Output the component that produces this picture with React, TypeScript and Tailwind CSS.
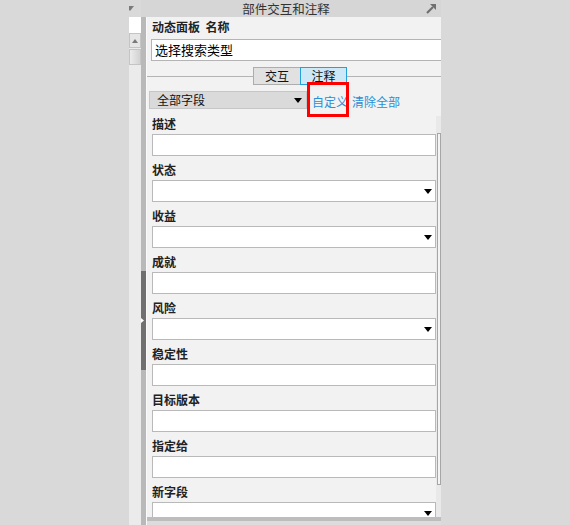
import React from "react";

const fields: { label: string; kind: "text" | "select" }[] = [
  { label: "描述", kind: "text" },
  { label: "状态", kind: "select" },
  { label: "收益", kind: "select" },
  { label: "成就", kind: "text" },
  { label: "风险", kind: "select" },
  { label: "稳定性", kind: "text" },
  { label: "目标版本", kind: "text" },
  { label: "指定给", kind: "text" },
  { label: "新字段", kind: "select" },
];

function Caret({ color = "#000" }: { color?: string }) {
  return (
    <svg width="8" height="5" viewBox="0 0 8 5" className="shrink-0">
      <polygon points="0,0 8,0 4,5" fill={color} />
    </svg>
  );
}

function PopOutIcon() {
  return (
    <svg width="10" height="10" viewBox="0 0 10 10">
      <polygon points="10,0 10,6 4,0" fill="#6f6f6f" />
      <line x1="1" y1="9" x2="7" y2="3" stroke="#6f6f6f" strokeWidth="2.2" />
    </svg>
  );
}

function Field({ label, kind, first }: { label: string; kind: "text" | "select"; first?: boolean }) {
  return (
    <div className={first ? "" : "mt-[6px]"}>
      <div className="h-[16px] leading-[16px] text-[12px] font-bold text-[#222]">{label}</div>
      <div className="mt-[2px] h-[22px] w-[284px] bg-white border border-[#b9b9b9] flex items-center justify-end pr-[3px]">
        {kind === "select" && <Caret />}
      </div>
    </div>
  );
}

export default function App() {
  return (
    <div
      className="w-[570px] h-[525px] flex bg-[#d9d9d9] overflow-hidden"
      style={{ fontFamily: '"Noto Sans CJK SC", "Noto Sans", sans-serif' }}
    >
      <div className="w-[129px] shrink-0" />

      {/* left panel scroll strip */}
      <div className="w-[12px] shrink-0 flex flex-col bg-[#ebebeb]">
        <div className="h-[17px] bg-[#d9d9d9] flex items-center overflow-hidden">
          <div className="ml-[-3px]">
            <Caret color="#7a7a7a" />
          </div>
        </div>
        <div className="h-[16px] bg-white" />
        <div className="h-[15px] bg-[#e6e6e6] border border-[#c4c4c4] flex items-center justify-center">
          <svg width="6" height="4" viewBox="0 0 6 4">
            <polygon points="0,4 6,4 3,0" fill="#7a7a7a" />
          </svg>
        </div>
        <div className="mt-[1px] h-[16px] border border-[#c4c4c4] bg-gradient-to-r from-[#ececec] to-[#d2d2d2]" />
      </div>

      {/* splitter */}
      <div className="w-[5px] shrink-0 flex flex-col">
        <div className="h-[17px] bg-[#d6d6d6]" />
        <div className="h-[254px] bg-[#b9b9b9]" />
        <div className="h-[99px] bg-[#707070] flex items-center">
          <svg width="3" height="5" viewBox="0 0 3 5">
            <polygon points="0,0 3,2.5 0,5" fill="#ffffff" />
          </svg>
        </div>
        <div className="flex-1 bg-[#b9b9b9]" />
      </div>

      {/* main panel */}
      <div className="w-[295px] shrink-0 flex flex-col">
        <div className="h-[17px] bg-[#d6d6d6] flex items-center relative">
          <div className="flex-1 text-center text-[12.5px] leading-[17px] text-[#333]">部件交互和注释</div>
          <div className="w-[15px] flex items-center">
            <PopOutIcon />
          </div>
        </div>

        <div className="flex-1 bg-[#f2f2f2] border-l border-[#fafafa] flex flex-col min-h-0">
          <div className="mt-[2px] ml-[5px] h-[16px] leading-[16px] text-[12px] font-bold text-[#222]">动态面板&nbsp;&nbsp;名称</div>
          <div className="mt-[4px] ml-[4px] h-[22px] bg-white border border-r-0 border-[#b4b4b4] flex items-center pl-[3px] text-[13px] text-black">
            选择搜索类型
          </div>

          {/* tabs */}
          <div className="mt-[6px] h-[18px] flex">
            <div className="w-[106px] h-[10px] border-b border-[#b4b4b4]" />
            <div className="w-[47px] h-[18px] bg-[#e1e1e1] border border-r-0 border-[#adadad] flex items-center justify-center text-[12px] text-[#111]">
              交互
            </div>
            <div className="w-[47px] h-[18px] bg-[#cde8f7] border border-[#26a0da] flex items-center justify-center text-[12px] text-[#111]">
              注释
            </div>
            <div className="flex-1 h-[10px] border-b border-[#b4b4b4]" />
          </div>

          {/* filter row */}
          <div className="mt-[6px] ml-[2px] flex items-center h-[18px]">
            <div className="w-[158px] h-[18px] bg-[#dadada] border border-[#c6c6c6] flex items-center justify-between pl-[7px] pr-[4px] text-[12px] text-[#111]">
              <span>全部字段</span>
              <Caret />
            </div>
            <div className="relative ml-[5px] pt-[4px] text-[12px] text-[#2b8ed6]">
              自定义
              <div className="absolute left-[-5px] top-[-7px] w-[42px] h-[35px] border-[3px] border-[#ff0000]" />
            </div>
            <div className="ml-[4px] pt-[4px] text-[12px] text-[#2b8ed6]">清除全部</div>
          </div>

          {/* scroll area */}
          <div className="mt-[7px] h-[401px] flex overflow-hidden">
            <div className="flex-1 pl-[5px]">
              {fields.map((f, i) => (
                <Field key={f.label} label={f.label} kind={f.kind} first={i === 0} />
              ))}
            </div>
            <div className="w-[5px] bg-[#e9e9e9] flex flex-col">
              <div className="mt-[17px] ml-[1px] h-[352px] bg-[#f4f4f4] border border-[#a6a6a6]" />
            </div>
          </div>
          <div className="h-[4px] bg-[#bdbdbd]" />
          <div className="flex-1 bg-[#dcdcdc]" />
        </div>
      </div>
    </div>
  );
}
